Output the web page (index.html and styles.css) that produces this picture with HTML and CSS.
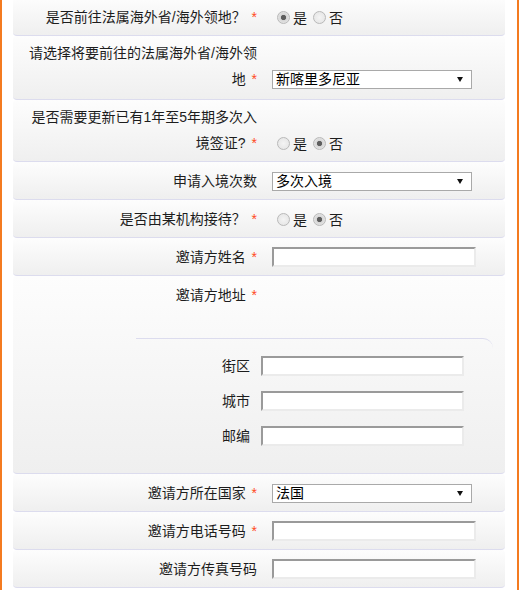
FILE: index.html
```html
<!DOCTYPE html>
<html lang="zh-CN">
<head>
<meta charset="utf-8">
<title>表单</title>
<link rel="stylesheet" href="styles.css">
</head>
<body>
<div class="form">
  <div class="row">
    <div class="label">是否前往法属海外省/海外领地？ <span class="req">*</span></div>
    <div class="ctrl">
      <input type="radio" class="radio" name="r1" checked><span>是</span>
      <input type="radio" class="radio" name="r1"><span>否</span>
    </div>
  </div>
  <div class="row row-two-a">
    <div class="label">请选择将要前往的法属海外省/海外领地 <span class="req">*</span></div>
    <div class="ctrl">
      <span class="selwrap"><select class="sel"><option>新喀里多尼亚</option></select></span>
    </div>
  </div>
  <div class="row row-two-b">
    <div class="label">是否需要更新已有1年至5年期多次入境签证? <span class="req">*</span></div>
    <div class="ctrl">
      <input type="radio" class="radio" name="r2"><span>是</span>
      <input type="radio" class="radio" name="r2" checked><span>否</span>
    </div>
  </div>
  <div class="row">
    <div class="label">申请入境次数</div>
    <div class="ctrl">
      <span class="selwrap"><select class="sel"><option>多次入境</option></select></span>
    </div>
  </div>
  <div class="row">
    <div class="label">是否由某机构接待？ <span class="req">*</span></div>
    <div class="ctrl">
      <input type="radio" class="radio" name="r3"><span>是</span>
      <input type="radio" class="radio" name="r3" checked><span>否</span>
    </div>
  </div>
  <div class="row">
    <div class="label">邀请方姓名 <span class="req">*</span></div>
    <div class="ctrl"><input type="text" class="txt"></div>
  </div>
  <div class="row row-addr">
    <div class="line">
      <div class="label">邀请方地址 <span class="req">*</span></div>
    </div>
    <div class="subbox">
      <div class="subrow"><div class="sublabel">街区</div><input type="text" class="txt sub"></div>
      <div class="subrow"><div class="sublabel">城市</div><input type="text" class="txt sub"></div>
      <div class="subrow"><div class="sublabel">邮编</div><input type="text" class="txt sub"></div>
    </div>
  </div>
  <div class="row">
    <div class="label">邀请方所在国家 <span class="req">*</span></div>
    <div class="ctrl">
      <span class="selwrap"><select class="sel"><option>法国</option></select></span>
    </div>
  </div>
  <div class="row">
    <div class="label">邀请方电话号码 <span class="req">*</span></div>
    <div class="ctrl"><input type="text" class="txt"></div>
  </div>
  <div class="row">
    <div class="label">邀请方传真号码</div>
    <div class="ctrl"><input type="text" class="txt"></div>
  </div>
</div>
</body>
</html>
```
FILE: styles.css
```css
html {
  overflow: hidden;
  background: #ffffff;
}
body {
  margin: 0;
  min-height: 590px;
  border-left: 2px solid #f47b20;
  border-right: 2px solid #f47b20;
  font-family: "Liberation Sans", "Noto Sans CJK SC", sans-serif;
  font-size: 14px;
  color: #1d1d1d;
  background: #ffffff;
}
.form {
  margin-top: -2px;
  padding: 0 12px 0 11px;
}
.row {
  display: flex;
  align-items: flex-end;
  background: linear-gradient(#fdfdfd, #efefef);
  border-bottom: 1px solid #dcdcee;
  border-radius: 4px;
  padding: 6px 0 5px;
}
.row-two-a {
  padding: 4px 0 7px;
}
.row-two-b {
  padding: 4px 0 5px;
}
.label {
  width: 238px;
  padding-left: 6px;
  text-align: right;
  line-height: 26px;
  flex: none;
}
.req {
  color: #ff4a1c;
  margin-left: 2px;
}
.ctrl {
  margin-left: 15px;
  height: 26px;
  display: flex;
  align-items: center;
}
.radio {
  appearance: none;
  -webkit-appearance: none;
  width: 13px;
  height: 13px;
  margin: 0 3px 0 5px;
  border: 1px solid #b9b9b9;
  border-radius: 50%;
  background: radial-gradient(circle, #f4f4f4 0, #e2e2e2 100%);
  box-sizing: border-box;
}
.radio:checked {
  background: radial-gradient(circle, #5e5e5e 0, #5e5e5e 2.2px, #d6d6d6 3px, #eeeeee 100%);
}
.ctrl span {
  margin-right: 1px;
}
.selwrap {
  position: relative;
  display: inline-block;
  height: 19px;
}
.selwrap::after {
  content: "";
  position: absolute;
  right: 9px;
  top: 7px;
  border-left: 3.5px solid transparent;
  border-right: 3.5px solid transparent;
  border-top: 5px solid #111;
  pointer-events: none;
}
.sel {
  appearance: none;
  -webkit-appearance: none;
  width: 200px;
  height: 19px;
  border: 1px solid #a9a9a9;
  background: #ffffff;
  font-family: "Liberation Sans", "Noto Sans CJK SC", sans-serif;
  font-size: 14px;
  color: #000;
  padding: 0 0 0 3px;
  line-height: 17px;
  border-radius: 0;
  display: block;
}
.txt {
  width: 204px;
  height: 20px;
  box-sizing: border-box;
  border-style: solid;
  border-width: 2px;
  border-color: #9a9a9a #ebebeb #ebebeb #9a9a9a;
  background: #ffffff;
  padding: 0 2px;
  margin: 0;
  font-size: 14px;
}
.txt.sub {
  width: 203px;
  margin-left: 11px;
}
.row-addr {
  display: block;
}
.line {
  display: flex;
}
.subbox {
  margin: 30px 12px 0 123px;
  border-top: 1px solid #dcdcee;
  border-top-right-radius: 10px;
  padding: 17px 0 22px;
  display: flex;
  flex-direction: column;
  gap: 15px;
}
.subrow {
  display: flex;
  align-items: center;
  height: 20px;
}
.sublabel {
  width: 114px;
  text-align: right;
  line-height: 20px;
}
```
